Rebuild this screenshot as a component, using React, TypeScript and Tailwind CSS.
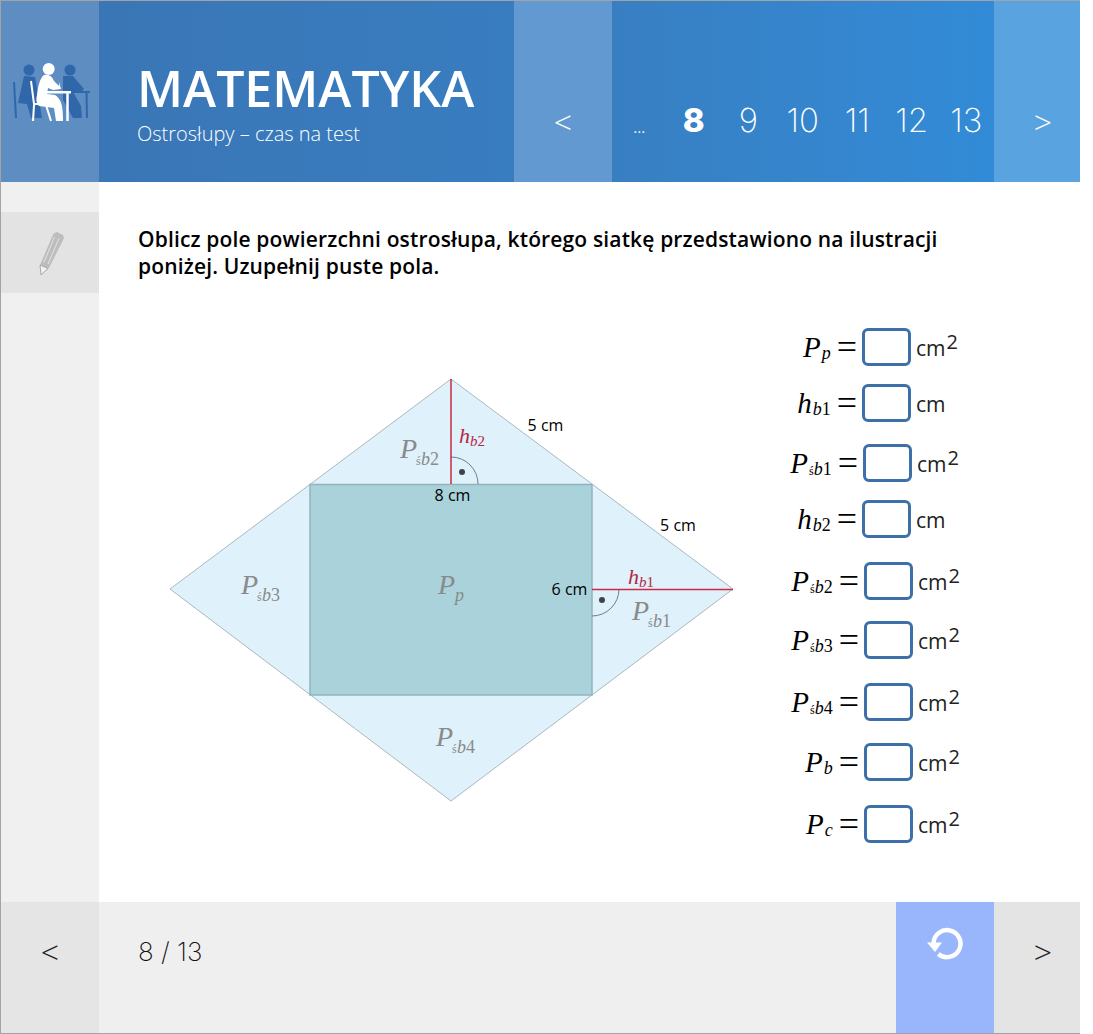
import React from 'react';

const UI_FONT = 'font-["Open_Sans",sans-serif]';
const THIN_FONT = 'font-["Inter",sans-serif]';
const MATH_FONT = 'font-["Liberation_Serif",serif]';

interface EquationRow {
  main: string;
  letter: string;
  digit?: string;
  small?: string;
  unit: string;
  squared: boolean;
  labelClass: string;
  topClass: string;
}

const rows: EquationRow[] = [
  { main: 'P', letter: 'p', unit: 'cm', squared: true, labelClass: 'w-[84px]', topClass: 'mt-[8px]' },
  { main: 'h', letter: 'b', digit: '1', unit: 'cm', squared: false, labelClass: 'w-[84px]', topClass: 'mt-[18px]' },
  { main: 'P', small: 'ś', letter: 'b', digit: '1', unit: 'cm', squared: true, labelClass: 'w-[85px]', topClass: 'mt-[22px]' },
  { main: 'h', letter: 'b', digit: '2', unit: 'cm', squared: false, labelClass: 'w-[84px]', topClass: 'mt-[18px]' },
  { main: 'P', small: 'ś', letter: 'b', digit: '2', unit: 'cm', squared: true, labelClass: 'w-[86px]', topClass: 'mt-[24px]' },
  { main: 'P', small: 'ś', letter: 'b', digit: '3', unit: 'cm', squared: true, labelClass: 'w-[86px]', topClass: 'mt-[21px]' },
  { main: 'P', small: 'ś', letter: 'b', digit: '4', unit: 'cm', squared: true, labelClass: 'w-[86px]', topClass: 'mt-[24px]' },
  { main: 'P', letter: 'b', unit: 'cm', squared: true, labelClass: 'w-[86px]', topClass: 'mt-[22px]' },
  { main: 'P', letter: 'c', unit: 'cm', squared: true, labelClass: 'w-[86px]', topClass: 'mt-[24px]' },
];

const pages = ['...', '8', '9', '10', '11', '12', '13'];

const PeopleIcon = () => (
  <svg width="98" height="80" viewBox="0 50 98 80" className="block mt-[49px]">
    <g fill="#2f67aa" stroke="#2f67aa">
      <circle cx="28" cy="70" r="5.5" stroke="none" />
      <circle cx="69" cy="70" r="5.5" stroke="none" />
      <path d="M23 76 L34 77 L38 100 L41 118 L30 118 L26 104 L17 103 Z" stroke="none" />
      <path d="M13 82 L15 118" strokeWidth="2" fill="none" />
      <path d="M62 76 L72 76 L83 89 L80 92 L72 92 L80 106 L81 118 L72 118 L62 100 Z" stroke="none" />
      <path d="M66 91 H89 V93 H66 Z" stroke="none" />
      <path d="M85.5 92 L86 118" strokeWidth="2" fill="none" />
    </g>
    <g fill="#ffffff" stroke="#ffffff">
      <circle cx="47.7" cy="69" r="6" stroke="none" />
      <path d="M43 75 C48 74 51 76 53 81 L58 86 L58 82 L60 89 L52 90 L47 88 L46 94 L54 95 C61 99 62 108 62 121 L55 121 L53 108 L38 106 C35 103 35 99 36 95 C37 86 39 78 43 75 Z" stroke="none" />
      <path d="M30 81 L33 104 L45 104" strokeWidth="2" fill="none" />
      <path d="M33 105 L32 121" strokeWidth="2" fill="none" />
      <path d="M45 105 L50 121" strokeWidth="2" fill="none" />
      <path d="M46 91 H70 V93.5 H46 Z" stroke="none" />
      <path d="M66.5 93 V121" strokeWidth="2.5" fill="none" />
    </g>
  </svg>
);

const PencilIcon = () => (
  <svg width="30" height="46" viewBox="37 231 30 46">
    <path d="M53.5 233.5 L57 232 L63 235 L64 238 L49 268 L41 274 L40 265 Z" fill="#bdbdbd" />
    <path d="M54.5 237 L44 262 M59 238.5 L48 264" stroke="#e3e3e3" strokeWidth="1" fill="none" />
    <path d="M40 265 L48 268.5 L41 275 Z" fill="#f2f2f2" stroke="#a8a8a8" strokeWidth="1" />
  </svg>
);

const RefreshIcon = () => (
  <svg width="40" height="37" viewBox="925 925 40 37">
    <path d="M933.5 943 A 13.5 13.5 0 1 1 938.3 954" stroke="#ffffff" strokeWidth="4.5" fill="none" />
    <path d="M927 942.5 H942 L935 952 Z" fill="#ffffff" />
  </svg>
);

const Diagram = () => (
  <svg width="640" height="500" viewBox="138 320 640 500" className="block shrink-0">
    <path d="M451 379 L733 589 L451 801 L170 589 Z" fill="#dff1fb" stroke="#a9b8c0" strokeWidth="1" />
    <rect x="310" y="484.5" width="282" height="210.5" fill="#a9d2db" stroke="#93b4bc" strokeWidth="1.5" />
    <path d="M451 457 A 27 27 0 0 1 478 484" fill="none" stroke="#6f7f88" strokeWidth="1" />
    <path d="M619 589 A 27 27 0 0 1 592 616" fill="none" stroke="#6f7f88" strokeWidth="1" />
    <circle cx="462" cy="472" r="3" fill="#3f4448" />
    <circle cx="602" cy="600" r="3" fill="#3f4448" />
    <path d="M451 379 V484" stroke="#c9283f" strokeWidth="1.5" />
    <path d="M592 589.5 H733" stroke="#d0283f" strokeWidth="1.5" />

    <g className={UI_FONT} fontSize="16" fill="#000000" textAnchor="middle">
      <text x="545.5" y="431">5 cm</text>
      <text x="678" y="531">5 cm</text>
      <text x="452.5" y="501">8 cm</text>
      <text x="569.5" y="595">6 cm</text>
    </g>

    <g className={MATH_FONT} fill="#8a8a8a" fontStyle="italic">
      <text x="400" y="458" fontSize="28">P</text>
      <text x="416" y="465" fontSize="12" fontStyle="normal">ś</text>
      <text x="421" y="465" fontSize="18">b<tspan fontStyle="normal">2</tspan></text>
      <text x="241" y="594" fontSize="28">P</text>
      <text x="257" y="601" fontSize="12" fontStyle="normal">ś</text>
      <text x="262" y="601" fontSize="18">b<tspan fontStyle="normal">3</tspan></text>
      <text x="438" y="594" fontSize="28">P</text>
      <text x="455" y="601" fontSize="18">p</text>
      <text x="632" y="620" fontSize="28">P</text>
      <text x="648" y="627" fontSize="12" fontStyle="normal">ś</text>
      <text x="653" y="627" fontSize="18">b<tspan fontStyle="normal">1</tspan></text>
      <text x="436" y="746" fontSize="28">P</text>
      <text x="452" y="753" fontSize="12" fontStyle="normal">ś</text>
      <text x="457" y="753" fontSize="18">b<tspan fontStyle="normal">4</tspan></text>
    </g>
    <g className={MATH_FONT} fill="#b5283f" fontStyle="italic">
      <text x="459" y="443" fontSize="22">h</text>
      <text x="470" y="446" fontSize="15">b<tspan fontStyle="normal">2</tspan></text>
      <text x="628" y="584" fontSize="22">h</text>
      <text x="639" y="587" fontSize="15">b<tspan fontStyle="normal">1</tspan></text>
    </g>
  </svg>
);

const Equation = ({ row }: { row: EquationRow }) => (
  <div className={`flex items-center h-[38px] ${row.topClass}`}>
    <div className={`flex items-center justify-end pr-[5px] ${row.labelClass} ${MATH_FONT} text-black`}>
      <span className="italic text-[29px] leading-none">{row.main}</span>
      <span className="flex items-baseline mt-[11px] ml-[1px]">
        {row.small && <span className="text-[12px] leading-none">{row.small}</span>}
        <span className="italic text-[18px] leading-none">{row.letter}</span>
        {row.digit && <span className="text-[18px] leading-none">{row.digit}</span>}
      </span>
      <span className="text-[36px] leading-none ml-[6px] font-light">=</span>
    </div>
    <div className="w-[49px] h-[38px] border-[3px] border-[#3d6fa9] rounded-[6px] bg-white shrink-0" />
    <span className={`${UI_FONT} ml-[5px] text-[21px] leading-none text-[#222] mt-[3px]`}>{row.unit}</span>
    {row.squared && <span className={`${UI_FONT} text-[20px] leading-none text-[#222] mb-[10px] ml-[1px]`}>2</span>}
  </div>
);

export default function App() {
  return (
    <div className={`w-[1080px] h-[1034px] bg-white border-l border-t border-b border-[#a3a3a3] flex flex-col ${UI_FONT}`}>
      <header className="h-[181px] flex shrink-0 text-white">
        <div className="w-[98px] bg-[#5d8dc1]">
          <PeopleIcon />
        </div>
        <div className="w-[415px] bg-gradient-to-r from-[#3a76b6] to-[#387dc0] pl-[38px] pt-[62px]">
          <h1 className="text-[50px] leading-[50px] font-semibold">MATEMATYKA</h1>
          <p className="text-[20px] leading-[26px] font-light mt-[8px]">Ostrosłupy – czas na test</p>
        </div>
        <div className="w-[98px] bg-[#6199d0] flex items-center justify-center pt-[60px] text-[32px] font-light">&lt;</div>
        <div className={`w-[382px] bg-gradient-to-r from-[#387fc2] to-[#328bd7] flex items-center pt-[58px] ${THIN_FONT}`}>
          {pages.map((page) => (
            <span
              key={page}
              className={`w-[54.5px] text-center leading-none ${page === '8' ? 'text-[33px] font-extrabold' : 'text-[33px] font-extralight'} ${page === '...' ? '!text-[14px] !font-normal pt-[14px]' : ''}`}
            >
              {page}
            </span>
          ))}
        </div>
        <div className="w-[86px] bg-[#5aa3e1] flex items-center justify-center pl-[12px] pt-[60px] text-[32px] font-light">&gt;</div>
      </header>

      <main className="flex flex-1 min-h-0">
        <aside className="w-[98px] bg-[#f0f0f0] pt-[30px]">
          <div className="h-[81px] bg-[#e3e3e3] flex items-center justify-center pl-[4px] pt-[3px]">
            <PencilIcon />
          </div>
        </aside>
        <section className="flex-1 pl-[39px] pt-[44px]">
          <p className="text-[21px] leading-[27px] font-semibold tracking-[0.15px] text-black w-[830px]">
            Oblicz pole powierzchni ostrosłupa, którego siatkę przedstawiono na ilustracji poniżej. Uzupełnij puste pola.
          </p>
          <div className="flex mt-[40px]">
            <Diagram />
            <div className="flex flex-col">
              {rows.map((row) => (
                <Equation key={row.main + row.letter + (row.digit ?? '')} row={row} />
              ))}
            </div>
          </div>
        </section>
      </main>

      <footer className="h-[131px] flex shrink-0">
        <div className="w-[98px] bg-[#e5e5e5] flex items-center justify-center pb-[32px] text-[32px] font-light text-[#222]">&lt;</div>
        <div className={`flex-1 bg-[#efefef] pl-[39px] pt-[32px] text-[26px] font-extralight text-[#111] leading-[36px] ${THIN_FONT}`}>8 / 13</div>
        <div className="w-[98px] bg-[#99b5fc] flex justify-center pt-[23px]">
          <RefreshIcon />
        </div>
        <div className="w-[86px] bg-[#e4e4e4] flex items-center justify-center pl-[12px] pb-[32px] text-[32px] font-light text-[#222]">&gt;</div>
      </footer>
    </div>
  );
}
